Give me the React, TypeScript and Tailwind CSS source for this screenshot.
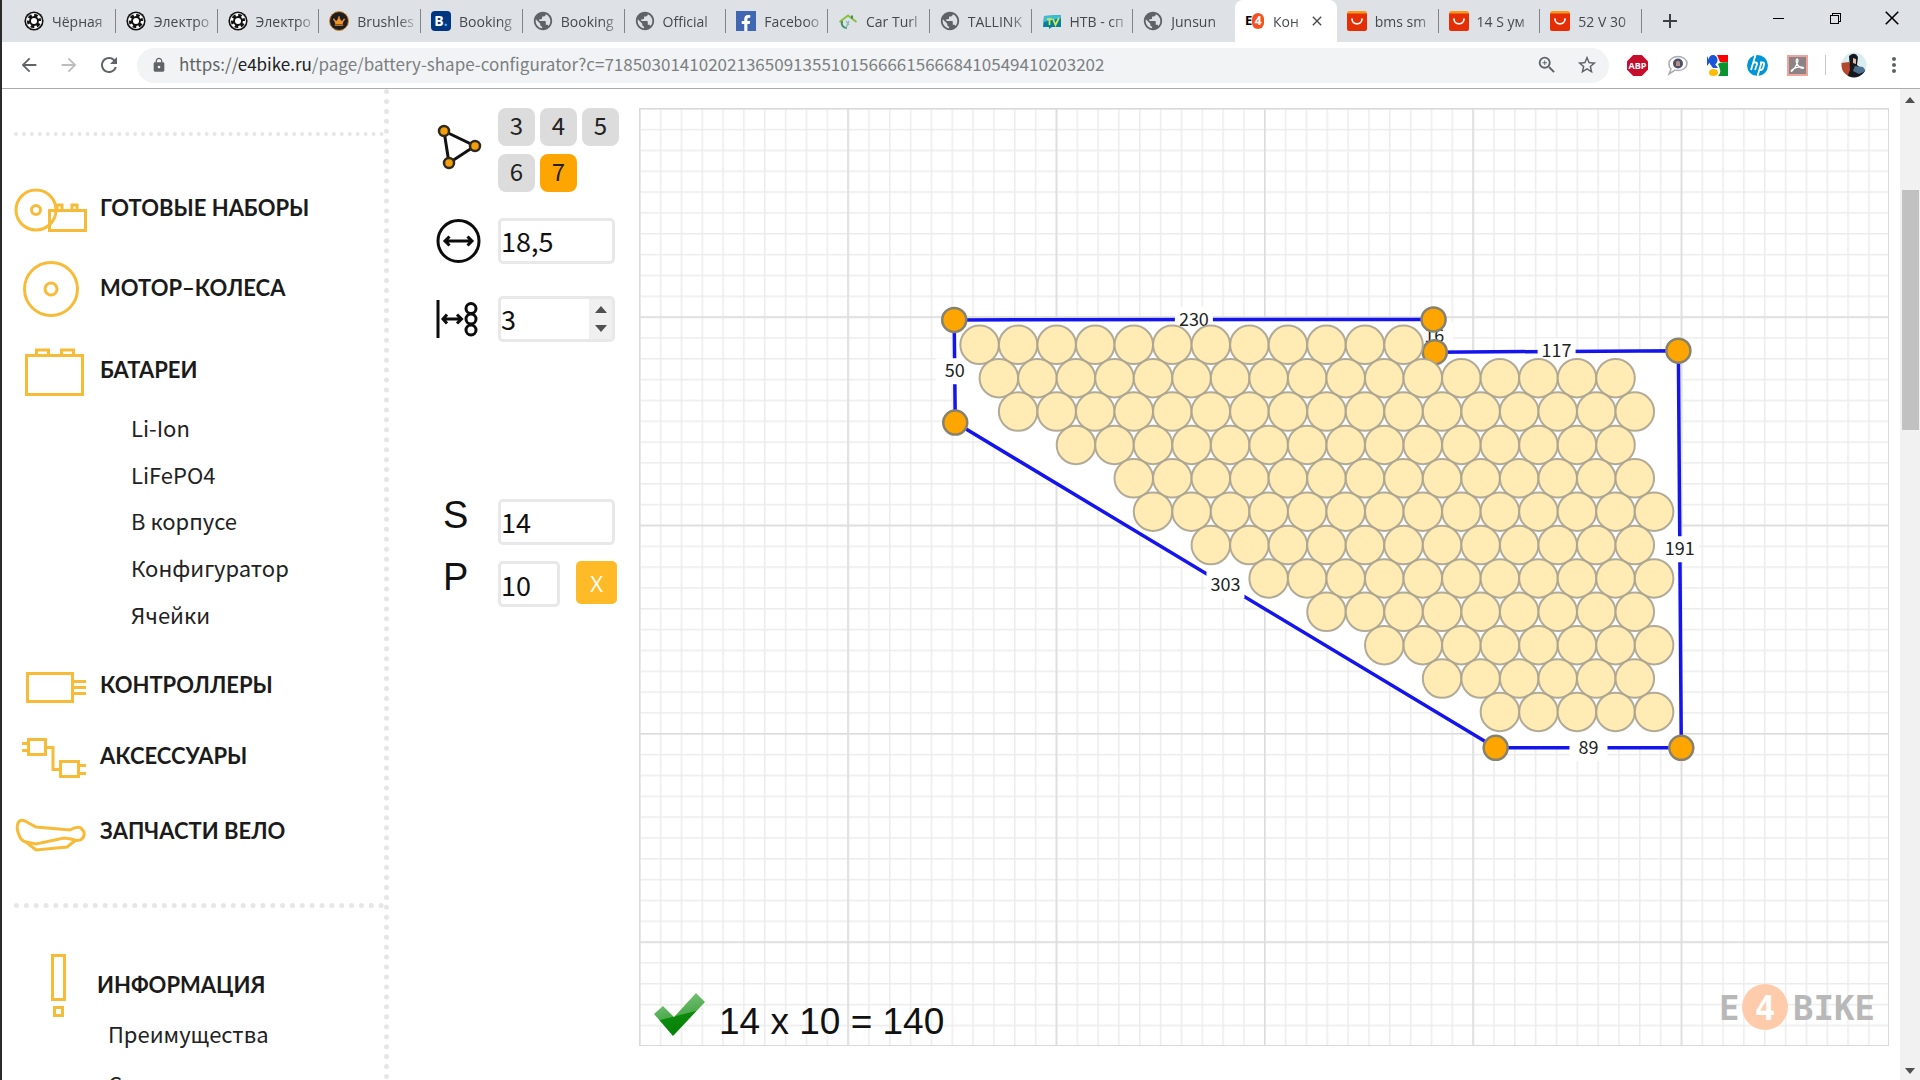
import { useState } from "react";
import type { ReactNode } from "react";
import { FaCrown, FaFacebookF } from "react-icons/fa";
import {
  MdAdd, MdArrowBack, MdArrowForward, MdClose, MdLock, MdMoreVert,
  MdPublic, MdRefresh, MdStarBorder, MdZoomIn,
} from "react-icons/md";
import { VscChromeClose, VscChromeMinimize, VscChromeRestore } from "react-icons/vsc";

/* ---------- favicons ---------- */

const WheelFav = () => (
  <svg viewBox="0 0 20 20" className="size-5">
    <circle cx="10" cy="10" r="9.6" fill="#111" />
    <circle cx="10" cy="10" r="7.6" fill="none" stroke="#fff" strokeWidth="0.8" />
    <circle cx="10" cy="10" r="6.2" fill="none" stroke="#fff" strokeWidth="2.6" strokeDasharray="2.7 3.79" />
    <circle cx="10" cy="10" r="3" fill="#fff" />
  </svg>
);
const GlobeFav = () => <MdPublic className="size-[22px] -mx-px text-[#5f6368]" />;
const CrownFav = () => (
  <span className="size-5 rounded-full bg-[#1d1d22] border border-[#d98a2b] flex items-center justify-center">
    <FaCrown className="size-3 text-[#f0932b]" />
  </span>
);
const BookingFav = () => (
  <span className="size-5 rounded-sm bg-[#003580] text-white text-[14px] leading-5 font-bold text-center">
    B<span className="text-[#3db5ff]">.</span>
  </span>
);
const FacebookFav = () => (
  <span className="size-5 bg-[#4267b2] flex items-end justify-end pr-0.5">
    <FaFacebookF className="size-4 text-white" />
  </span>
);
const HouseFav = () => (
  <svg viewBox="0 0 20 20" className="size-5" fill="none">
    <path d="M1.5 11 L10 4.5 L18.5 11" stroke="#8bbf3f" strokeWidth="2" />
    <path d="M14 4.5v3M4 10c-1 4 1 7 5 7" stroke="#3b8f5a" strokeWidth="2" />
    <path d="M8 10l3 4M11 10l-3 7" stroke="#7fb8b4" strokeWidth="1.2" />
  </svg>
);
const TvFav = () => (
  <svg viewBox="0 0 20 20" className="size-5">
    <path d="M2 5l17-1v12H10l-3 2v-2H1z" fill="#087f9c" />
    <path d="M2 5l17-1v3L2 11z" fill="#3dbcd6" />
    <path d="M5 8h5M7.5 8v6M11 8l2.5 6L17 7" stroke="#d8ec4a" strokeWidth="1.7" fill="none" />
  </svg>
);
const E4Fav = () => (
  <span className="w-5 flex items-center text-[13px] font-bold text-black">
    E<span className="w-3 h-4 rounded-full bg-[#f4511e] text-white text-[12px] leading-4 text-center">4</span>
  </span>
);
const AliFav = () => (
  <svg viewBox="0 0 20 20" className="size-5">
    <rect width="20" height="12" rx="2.5" fill="#f39a1d" />
    <path d="M0 2.5h20V18a2 2 0 0 1-2 2H2a2 2 0 0 1-2-2z" fill="#e62e04" />
    <path d="M5 8c0 6.5 10 6.5 10 0" fill="none" stroke="#fff" strokeWidth="1.7" strokeLinecap="round" />
  </svg>
);

const TABS: { title: string; icon: ReactNode; active?: boolean }[] = [
  { title: "Чёрная", icon: <WheelFav /> },
  { title: "Электро", icon: <WheelFav /> },
  { title: "Электро", icon: <WheelFav /> },
  { title: "Brushles", icon: <CrownFav /> },
  { title: "Booking", icon: <BookingFav /> },
  { title: "Booking", icon: <GlobeFav /> },
  { title: "Official", icon: <GlobeFav /> },
  { title: "Faceboo", icon: <FacebookFav /> },
  { title: "Car Turl", icon: <HouseFav /> },
  { title: "TALLINK", icon: <GlobeFav /> },
  { title: "НТВ - сп", icon: <TvFav /> },
  { title: "Junsun", icon: <GlobeFav /> },
  { title: "Кон", icon: <E4Fav />, active: true },
  { title: "bms sm", icon: <AliFav /> },
  { title: "14 S ум", icon: <AliFav /> },
  { title: "52 V 30", icon: <AliFav /> },
];

function TabStrip() {
  return (
    <div className="h-[42px] bg-[#dee1e6] flex pl-3">
      <div className="flex flex-1 min-w-0">
        {TABS.map((t, i) => (
          <div key={i} className={`flex-1 min-w-0 flex items-center ${t.active ? "bg-white rounded-t-lg" : ""}`}>
            <button className="flex flex-1 min-w-0 items-center gap-2 pl-2.5 text-[14px] text-[#45494d]">
              <span className="shrink-0 flex">{t.icon}</span>
              <span className="flex-1 min-w-0 whitespace-nowrap text-left [mask-image:linear-gradient(to_right,black_70%,#0003)]">
                {t.title}
              </span>
            </button>
            {t.active
              ? <button aria-label="Закрыть" className="pl-1 pr-3"><MdClose className="size-4 text-[#45494d]" /></button>
              : <span className={`w-px h-6 ml-1 ${TABS[i + 1]?.active ? "" : "bg-[#808488]"}`} />}
          </div>
        ))}
      </div>
      <button aria-label="Новая вкладка" className="w-14 flex items-center justify-center">
        <MdAdd className="size-6 text-[#3c4043]" />
      </button>
      <div className="flex w-[222px] justify-end h-9 items-center text-black">
        <button aria-label="Свернуть" className="w-[57px] flex justify-center"><VscChromeMinimize className="size-4" /></button>
        <button aria-label="Восстановить" className="w-[57px] flex justify-center"><VscChromeRestore className="size-4" /></button>
        <button aria-label="Выход" className="w-[57px] flex justify-center"><VscChromeClose className="size-5" /></button>
      </div>
    </div>
  );
}

function Extensions() {
  return (
    <div className="flex items-center">
      <button aria-label="ABP" className="w-10 flex justify-center">
        <svg viewBox="0 0 21 21" className="size-[21px]">
          <path d="M6.2 0h8.6L21 6.2v8.6L14.8 21H6.2L0 14.8V6.2z" fill="#c70d2c" />
          <text x="10.5" y="14" textAnchor="middle" fontSize="9" fontWeight="700" fill="#fff">ABP</text>
        </svg>
      </button>
      <button aria-label="Чат" className="w-10 flex justify-center">
        <svg viewBox="0 0 21 21" className="size-[21px]">
          <path d="M11 1.5c5 0 9 3 9 7s-4 7-9 7c-1 0-2 0-3-.4L2 19l2-5C2 12.5 2 10 2 8.5c0-4 4-7 9-7z" fill="#fff" stroke="#a9adb3" strokeWidth="1.5" />
          <circle cx="11" cy="8.5" r="5" fill="#4c5068" />
          <path d="M9 8c0-3 4-3 4 0v3H9z" fill="#b58f85" />
        </svg>
      </button>
      <button aria-label="Google" className="w-10 flex justify-center">
        <svg viewBox="0 0 21 21" className="size-[21px]">
          <rect width="21" height="21" fill="#fff" />
          <path d="M10 0h11v7h-8z" fill="#f00" />
          <path d="M11 9c5-3 7-1 10-2v14H11c4-4 2-7 0-12z" fill="#0a9430" />
          <ellipse cx="6" cy="5" rx="4.5" ry="5" fill="#1a56d6" />
          <path d="M0 1l3 6-3 4z" fill="#1a56d6" />
          <path d="M3 9h5l3 4H6z" fill="#1a56d6" />
          <ellipse cx="6.5" cy="17.5" rx="4.5" ry="3.5" fill="#fbbc05" />
        </svg>
      </button>
      <button aria-label="HP" className="w-10 flex justify-center">
        <svg viewBox="0 0 21 21" className="size-[21px]">
          <circle cx="10.5" cy="10.5" r="10.5" fill="#0096d6" />
          <path d="M8.5 0L4 15M6.5 7.5h2q2 0 1.4 2L8 15M14.5 7.5L10.5 21M13 7.5h2.5q2.2 0 1.5 2.2l-1 3.5q-.5 1.8-2.2 1.8h-1.5" fill="none" stroke="#fff" strokeWidth="1.8" />
        </svg>
      </button>
      <button aria-label="PDF" className="w-10 flex justify-center">
        <svg viewBox="0 0 21 21" className="size-[21px]">
          <rect x="1" y="1" width="19" height="19" fill="#8b8385" stroke="#f0a39b" strokeWidth="2" />
          <path d="M10 4c2.5 0 0 7-5 12-1.5 1-1-1 2-2.5s7-2 9-1.2-1 2-4-.8S8.5 4.5 10 4z" fill="none" stroke="#fff" strokeWidth="1.3" />
        </svg>
      </button>
      <span className="w-px h-5 bg-[#c4c7ca] mx-2" />
      <button aria-label="Профиль" className="w-10 flex justify-center">
        <svg viewBox="0 0 26 26" className="size-[26px]">
          <clipPath id="avatar"><circle cx="13" cy="13" r="12.5" /></clipPath>
          <g clipPath="url(#avatar)">
            <rect width="26" height="26" fill="#d9edf0" />
            <path d="M0 11l8-1 3 7-4 9H0z" fill="#b5492c" />
            <path d="M8 4q6-5 9 1l-1 8 8 6v7H6l3-8z" fill="#17181f" />
            <path d="M12 6l3 1v5l-3-1z" fill="#dcb9a8" />
            <path d="M14 14l8 1 3 4-7 3-6-3z" fill="#4f6f91" />
          </g>
        </svg>
      </button>
      <button aria-label="Меню" className="w-10 flex justify-center"><MdMoreVert className="size-6 text-[#5f6368]" /></button>
    </div>
  );
}

function Toolbar() {
  return (
    <div className="h-[47px] bg-white border-b border-[#a9abad] flex items-center pl-[7px] pr-1.5">
      <button aria-label="Назад" className="w-10 flex justify-center"><MdArrowBack className="size-[22px] text-[#5f6368]" /></button>
      <button aria-label="Вперёд" className="w-10 flex justify-center"><MdArrowForward className="size-[22px] text-[#babcbe]" /></button>
      <button aria-label="Обновить" className="w-10 flex justify-center"><MdRefresh className="size-6 text-[#5f6368]" /></button>
      <div className="flex-1 min-w-0 h-[35px] ml-2 mr-2 rounded-full bg-[#f1f3f4] flex items-center pl-3.5 pr-0.5 text-[#5f6368]">
        <MdLock className="size-4" />
        <p className="flex-1 min-w-0 pl-3 pb-0.5 text-[17px] leading-8 whitespace-nowrap text-[#7b7f83] font-['Noto_Sans_CJK_JP',sans-serif]">
          <span className="text-[#5f6368]">https://</span><span className="text-[#202124]">e4bike.ru</span>/page/battery-shape-configurator?c=71850301410202136509135510156666156668410549410203202
        </p>
        <button aria-label="Масштаб" className="w-10 flex justify-center"><MdZoomIn className="size-[22px]" /></button>
        <button aria-label="В закладки" className="w-10 flex justify-center"><MdStarBorder className="size-[22px]" /></button>
      </div>
      <Extensions />
    </div>
  );
}

/* ---------- sidebar ---------- */

function MenuIcon({ children }: { children: ReactNode }) {
  return (
    <svg viewBox="0 0 74 60" className="w-[74px] h-[60px] shrink-0" fill="none" stroke="#f8bb38" strokeWidth="3">
      {children}
    </svg>
  );
}

function MenuItem({ label, icon, size }: { label: string; icon: ReactNode; size: string }) {
  return (
    <a href="#" className={`flex items-center gap-3 font-[Lato] font-bold text-[22px] leading-8 text-[#1b1b1b] ${size}`}>
      <MenuIcon>{icon}</MenuIcon>
      {label}
    </a>
  );
}

const BATTERY_LINKS = ["Li-Ion", "LiFePO4", "В корпусе", "Конфигуратор", "Ячейки"];
const SUBLINK = "text-[22px] leading-8 text-[#222] font-['Noto_Sans_CJK_JP',sans-serif]";

function Sidebar() {
  return (
    <nav className="w-[387px] shrink-0 pl-3 border-r-[5px] border-dotted border-[#e6e6e6] overflow-hidden">
      <div className="mt-[43px] border-t-4 border-dotted border-[#e6e6e6]" />
      <div className="pt-8">
        <MenuItem size="h-[80px]" label="ГОТОВЫЕ НАБОРЫ" icon={<>
          <circle cx="22" cy="32" r="20" /><circle cx="22" cy="32" r="4.5" />
          <rect x="35.5" y="32.5" width="36" height="20" />
          <path d="M43 32v-5h5v5M58 32v-5h5v5" />
        </>} />
        <MenuItem size="h-[80px]" label="МОТОР–КОЛЕСА" icon={<>
          <circle cx="37" cy="31" r="26.5" /><circle cx="37" cy="31" r="6" />
        </>} />
        <MenuItem size="h-[84px]" label="БАТАРЕИ" icon={<>
          <rect x="12.5" y="15.5" width="56" height="39" />
          <path d="M22.5 15v-5h12v5M47.5 15v-5h12v5" />
        </>} />
        <ul className="h-[233px] -mt-2 grid grid-rows-5 pl-[117px]">
          {BATTERY_LINKS.map((l) => (
            <li key={l} className="flex items-center">
              <a href="#" className={SUBLINK}>{l}</a>
            </li>
          ))}
        </ul>
        <div className="pt-3">
          <MenuItem size="h-[72px]" label="КОНТРОЛЛЕРЫ" icon={<>
            <rect x="13.5" y="18.5" width="45" height="28" />
            <path d="M60 26.5h12M60 32.5h12M60 38.5h12" />
          </>} />
          <MenuItem size="h-[70px]" label="АКСЕССУАРЫ" icon={<>
            <rect x="14.5" y="13.5" width="17" height="15" />
            <path d="M8 17.5h6M8 24.5h6M33 21.5h6v22h7" />
            <rect x="46.5" y="35.5" width="18" height="15" />
            <path d="M66 39.5h6M66 47.5h6" />
          </>} />
          <MenuItem size="h-[80px]" label="ЗАПЧАСТИ ВЕЛО" icon={<>
            <path d="M4 22Q6 18 11 20L22 26L56 29Q63 25 67 27L70 31Q71 35 68 38Q64 41 57 38L50 37L22 43L12 41Q7 40 5 34Q2 27 4 22z" />
            <path d="M12 41l10 8 31-3 9-7" />
          </>} />
        </div>
      </div>
      <div className="mt-8 border-t-[5px] border-dotted border-[#e6e6e6]" />
      <div className="mt-[52px] h-[50px] flex items-center pl-[37px]">
        <svg viewBox="0 0 16 64" className="w-4 h-16 shrink-0" fill="none" stroke="#f8bb38" strokeWidth="3">
          <rect x="1.5" y="2.5" width="12" height="44" />
          <rect x="3.5" y="54.5" width="8" height="8" />
        </svg>
        <a href="#" className="pl-[30px] font-[Lato] font-bold text-[22px] leading-8 text-[#1b1b1b]">ИНФОРМАЦИЯ</a>
      </div>
      <ul className="pl-[94px] flex flex-col gap-1">
        {["Преимущества", "Статьи"].map((l) => (
          <li key={l} className="h-[46px] flex items-center">
            <a href="#" className={SUBLINK}>{l}</a>
          </li>
        ))}
      </ul>
    </nav>
  );
}

/* ---------- parameters ---------- */

const FIELD = "h-[46px] border-[3px] border-[#e8e8e8] rounded-[5px] bg-white text-[27px] text-[#111] font-['Noto_Sans_CJK_JP',sans-serif]";

function Params() {
  const [corners, setCorners] = useState(7);
  const [gap, setGap] = useState(3);
  return (
    <form className="w-[250px] shrink-0 pl-[47px] pt-[19px]" onSubmit={(e) => e.preventDefault()}>
      <div className="flex">
        <div className="w-[62px] shrink-0 pt-3.5">
          <svg viewBox="0 0 46 50" className="w-[46px] h-[50px]">
            <path d="M8 9l31 15L13 41z" fill="none" stroke="#111" strokeWidth="3" />
            {[[8, 9], [39, 24], [13, 41]].map(([x, y]) => (
              <circle key={x} cx={x} cy={y} r="5" fill="#f59e0b" stroke="#2e2a20" strokeWidth="2.5" />
            ))}
          </svg>
        </div>
        <div className="flex flex-wrap gap-x-[5px] gap-y-2">
          {[3, 4, 5, 6, 7].map((n) => (
            <button key={n} type="button" onClick={() => setCorners(n)}
              className={`w-[37px] h-[38px] pb-1 rounded-lg text-[24px] leading-8 text-[#222] font-['Noto_Sans_CJK_JP',sans-serif] ${n === corners ? "bg-[#ffa500]" : "bg-[#dcdcdc]"}`}>
              {n}
            </button>
          ))}
        </div>
      </div>

      <div className="flex items-center mt-[26px]">
        <label htmlFor="diameter" aria-label="Диаметр" className="w-[62px]">
          <svg viewBox="0 0 46 46" className="size-[46px]" fill="none" stroke="#0c0c0c" strokeWidth="3">
            <circle cx="22.5" cy="23" r="20.5" />
            <path d="M9 23h27M13.5 18.5L9 23l4.5 4.5M31.5 18.5L36 23l-4.5 4.5" />
          </svg>
        </label>
        <input id="diameter" defaultValue="18,5" className={`w-[117px] pb-0.5 ${FIELD}`} />
      </div>

      <div className="flex items-center mt-8">
        <label htmlFor="gap" aria-label="Отступ" className="w-[62px]">
          <svg viewBox="0 0 46 46" className="size-[46px]" fill="none" stroke="#0c0c0c" strokeWidth="3">
            <path d="M2 4v38M7 23h18M11 18.5L7 23l4 4.5M21 18.5l4.5 4.5-4.5 4.5" />
            <circle cx="35" cy="12.5" r="5" /><circle cx="35" cy="23" r="5" /><circle cx="35" cy="34" r="5" />
          </svg>
        </label>
        <div className={`w-[117px] flex ${FIELD}`}>
          <input id="gap" inputMode="numeric" value={gap} onChange={(e) => setGap(parseInt(e.target.value, 10) || 0)} className="flex-1 min-w-0" />
          <div className="w-[23px] bg-[#f0f0f0] flex flex-col items-center justify-center gap-3">
            <button type="button" aria-label="Больше" onClick={() => setGap(gap + 1)}>
              <svg viewBox="0 0 12 7" className="w-3 h-[7px]"><path d="M0 7L6 0l6 7z" fill="#505050" /></svg>
            </button>
            <button type="button" aria-label="Меньше" onClick={() => setGap(gap - 1)}>
              <svg viewBox="0 0 12 7" className="w-3 h-[7px]"><path d="M0 0l6 7 6-7z" fill="#505050" /></svg>
            </button>
          </div>
        </div>
      </div>

      <div className="flex items-start mt-[157px]">
        <label htmlFor="series" className="w-[62px] pl-[7px] font-['Liberation_Sans'] text-[38px] leading-8 text-[#111]">S</label>
        <input id="series" defaultValue="14" className={`w-[117px] pb-0.5 ${FIELD}`} />
      </div>
      <div className="flex items-start mt-4">
        <label htmlFor="parallel" className="w-[62px] pl-[7px] font-['Liberation_Sans'] text-[38px] leading-8 text-[#111]">P</label>
        <input id="parallel" defaultValue="10" className={`w-[62px] ${FIELD}`} />
        <button type="button" className="w-[41px] h-[43px] ml-4 rounded-[5px] bg-[#ffbb27] text-white text-[22px] leading-10">X</button>
      </div>
    </form>
  );
}

/* ---------- battery canvas, 600 x 450 mm ---------- */

const K = 25 / 12; // px per mm
const CELL = 18.5 * K;

const POINTS = [
  [151.3, 101.7], [381.4, 101.5], [382, 117.2], [498.9, 116.5],
  [500.3, 307.1], [411.2, 307.1], [151.8, 151],
].map(([x, y]) => [x * K, y * K]);
const SIDES = [230, 16, 117, 191, 89, 303, 50];

// first cell of each row (in half-cells) and number of cells
const ROWS = [
  [0, 12], [1, 17], [2, 17], [5, 15], [8, 14], [9, 14],
  [12, 12], [15, 11], [18, 9], [21, 8], [24, 6], [27, 5],
];

function Canvas() {
  return (
    <svg viewBox="0 0 1250 938" className="w-full h-auto">
      <defs>
        <pattern id="minor" width={10 * K} height={10 * K} patternUnits="userSpaceOnUse">
          <path d={`M${10 * K} 0H0V${10 * K}`} fill="none" stroke="#ececec" strokeWidth="3" />
        </pattern>
        <pattern id="major" width={100 * K} height={100 * K} patternUnits="userSpaceOnUse">
          <path d={`M${100 * K} 0H0V${100 * K}`} fill="none" stroke="#dcdcdc" strokeWidth="3" />
        </pattern>
        <linearGradient id="tick" x1="0" y1="0" x2="0.3" y2="1">
          <stop offset="0" stopColor="#8ccb8c" />
          <stop offset="0.6" stopColor="#4dab4d" />
          <stop offset="0.62" stopColor="#0c8a0c" />
          <stop offset="1" stopColor="#078007" />
        </linearGradient>
      </defs>
      <rect width="1250" height="938" fill="#fff" />
      <rect width="1250" height="938" fill="url(#minor)" />
      <rect width="1250" height="938" fill="url(#major)" />
      <rect x="0.5" y="0.5" width="1249" height="937" fill="none" stroke="#d9d9d9" />

      <polygon points={POINTS.map((p) => p.join(",")).join(" ")} fill="#fff" stroke="#1414ec" strokeWidth="3.5" />
      {SIDES.map((len, i) => {
        const [x1, y1] = POINTS[i];
        const [x2, y2] = POINTS[(i + 1) % POINTS.length];
        const x = (x1 + x2) / 2;
        const y = (y1 + y2) / 2;
        return (
          <g key={len}>
            <rect x={x - 19} y={y - 13} width="38" height="26" fill="#fff" />
            <text x={x} y={y + 6} textAnchor="middle" fontSize="18" fill="#222" className="font-['Noto_Sans_CJK_JP',sans-serif]">{len}</text>
          </g>
        );
      })}
      {POINTS.map(([x, y], i) => (
        <circle key={i} cx={x} cy={y} r="12" fill="#ffa500" stroke="#85826f" strokeWidth="2.5" />
      ))}
      {ROWS.map(([start, count], row) =>
        Array.from({ length: count }, (_, i) => (
          <circle key={`${row}-${i}`} cx={340.6 + (start / 2 + i) * CELL} cy={236.8 + row * CELL * 0.866}
            r={CELL / 2} fill="#ffebb3" stroke="#a9a38f" strokeOpacity="0.9" strokeWidth="2" />
        ))
      )}

      <path d="M15 906l9-8 11 11 22-24 9 9-32 34z" fill="url(#tick)" />
      <text x="80" y="926" fontSize="37" fill="#111" className="font-['Liberation_Sans']">14 x 10 = 140</text>
      <g fontSize="34" fontWeight="700" fill="#b8b8b8" className="font-['DejaVu_Sans_Mono']">
        <text x="1080" y="912">E</text>
        <circle cx="1126" cy="899" r="23" fill="#ffccab" />
        <text x="1126" y="912" textAnchor="middle" fill="#fff">4</text>
        <text x="1154" y="912">BIKE</text>
      </g>
    </svg>
  );
}

function Scrollbar() {
  return (
    <div className="w-5 shrink-0 bg-[#f1f1f1] flex flex-col items-center pt-2 pb-1.5">
      <svg viewBox="0 0 10 6" className="w-2.5 h-1.5"><path d="M0 6l5-6 5 6z" fill="#505050" /></svg>
      <div className="mt-[87px] w-[17px] h-[240px] bg-[#c1c1c1]" />
      <div className="flex-1" />
      <svg viewBox="0 0 10 6" className="w-2.5 h-1.5"><path d="M0 0l5 6 5-6z" fill="#505050" /></svg>
    </div>
  );
}

export default function App() {
  return (
    <div className="h-screen overflow-hidden flex flex-col bg-white border-l-2 border-[#2b2b2b] font-['Open_Sans',sans-serif]">
      <header>
        <TabStrip />
        <Toolbar />
      </header>
      <div className="flex-1 min-h-0 flex">
        <Sidebar />
        <Params />
        <main className="flex-1 min-w-0 pt-[19px] pr-[11px] overflow-hidden">
          <Canvas />
        </main>
        <Scrollbar />
      </div>
    </div>
  );
}
